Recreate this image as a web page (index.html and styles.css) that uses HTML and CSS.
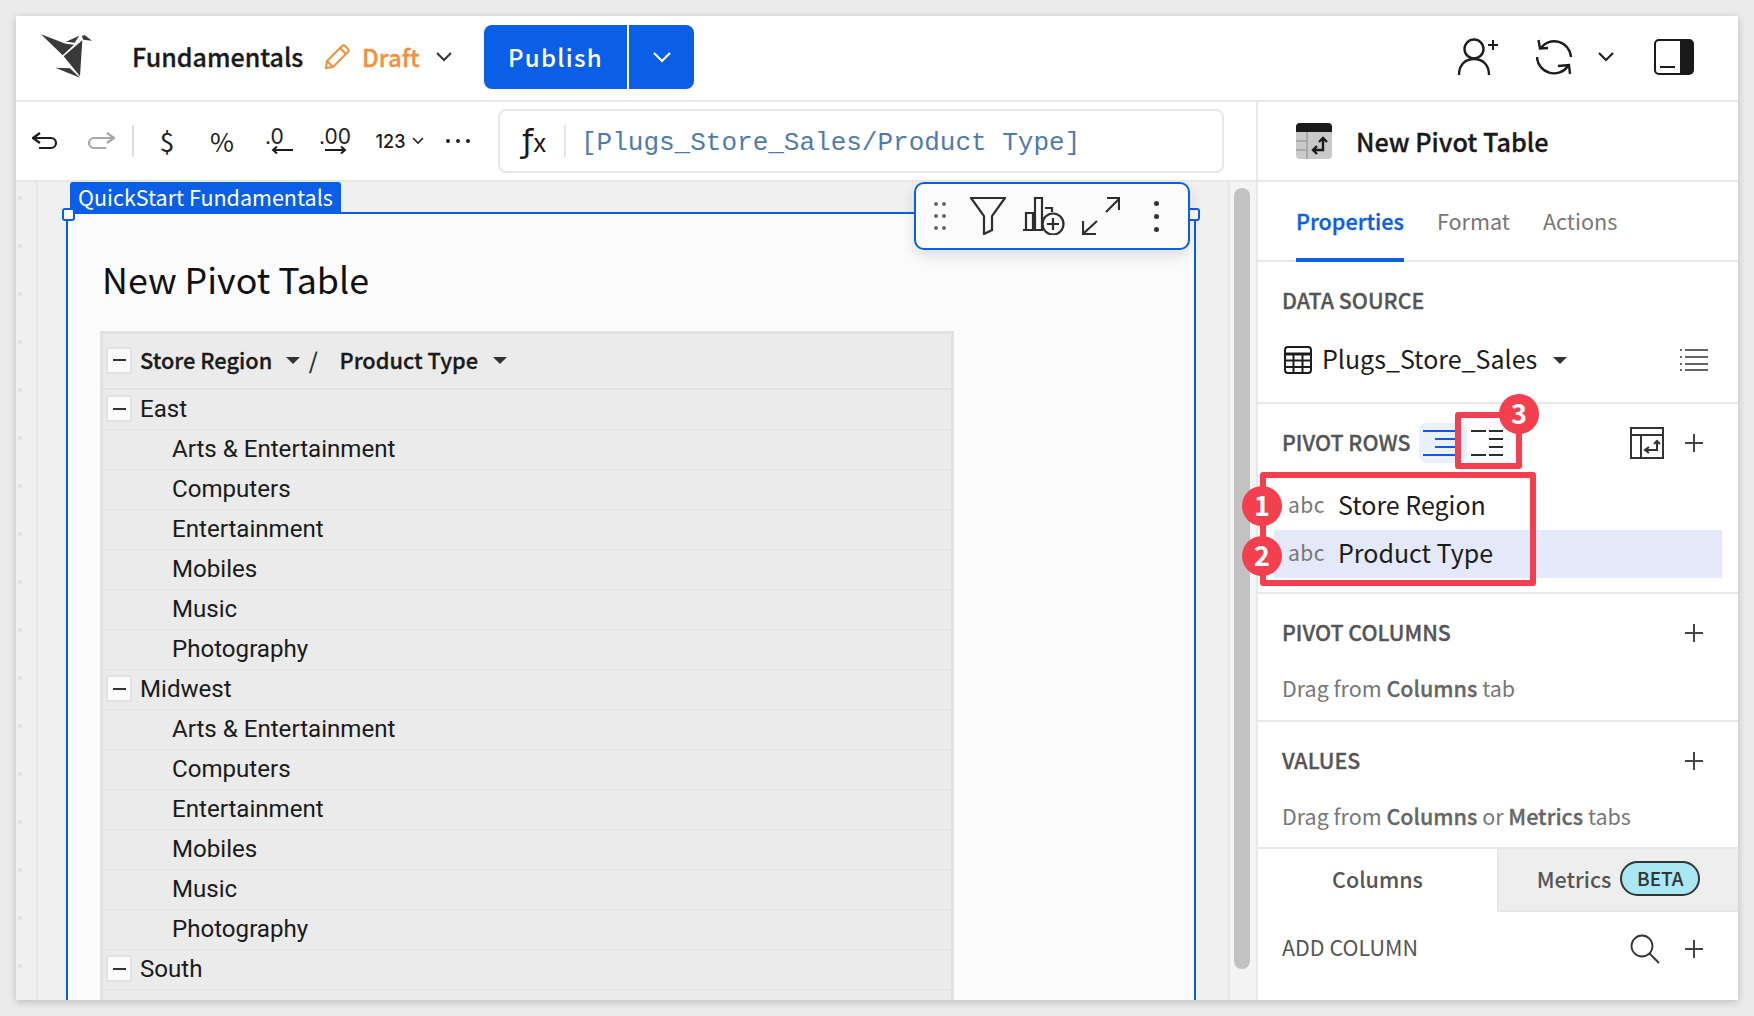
FILE: index.html
```html
<!DOCTYPE html>
<html lang="en">
<head>
<meta charset="utf-8"/>
<title>New Pivot Table</title>
<link rel="stylesheet" href="styles.css">
</head>
<body>
<div class="app">
  <header class="topbar">
    <svg class="logo" width="80" height="60" viewBox="0 0 240 180" fill="#3a3a3a">
      <polygon points="33,22 107,50 132,53 98,85"/>
      <polygon points="108,44 148,26 134,47"/>
      <polygon points="155,26 165,25 186,41 160,38"/>
      <polygon points="157,40 150,148 101,88 136,58"/>
      <polygon points="76,122 120,124 150,152"/>
    </svg>
    <span class="doc-name">Fundamentals</span>
    <svg class="pencil" width="26" height="26" viewBox="0 0 26 26" fill="none" stroke="#f0913f" stroke-width="2">
      <path d="M2 24l1-7L18 2c1-1 2-1 3 0l3 3c1 1 1 2 0 3L9 23z"/>
      <path d="M16 4l6 6M3 17l6 6"/>
    </svg>
    <span class="draft">Draft</span>
    <svg class="chev" width="16" height="10" viewBox="0 0 16 10"><path d="M1 1l7 7 7-7" fill="none" stroke="#333" stroke-width="2"/></svg>
    <div class="publish">
      <span class="publish-main">Publish</span>
      <span class="publish-more"><svg width="18" height="11" viewBox="0 0 18 11"><path d="M1 1l8 8 8-8" fill="none" stroke="#fff" stroke-width="2.2"/></svg></span>
    </div>
    <div class="top-right">
      <svg width="42" height="38" viewBox="0 0 42 38" fill="none" stroke="#1c1c1c" stroke-width="2.4">
        <circle cx="17" cy="11" r="9.5"/>
        <path d="M2 37c0-10 6-16 15-16s15 6 15 16"/>
        <path d="M36 2v10M31 7h10" stroke-width="2"/>
      </svg>
      <svg class="sync" width="36" height="37" viewBox="0 0 36 37" fill="none" stroke="#1c1c1c" stroke-width="2.4">
        <path d="M4.5 9A17 17 0 0 1 35 18"/>
        <path d="M1 18A17 17 0 0 0 32 27"/>
        <path d="M2.5 1L4 9.5l8-.5M22 27l11-1 1 9"/>
      </svg>
      <svg class="chev-sm" width="16" height="10" viewBox="0 0 16 10"><path d="M1 1l7 7 7-7" fill="none" stroke="#222" stroke-width="2.2"/></svg>
      <svg class="side-toggle" width="40" height="36" viewBox="0 0 40 36">
        <rect x="1" y="1" width="38" height="34" rx="4" fill="none" stroke="#1a1a1a" stroke-width="2"/>
        <path d="M26 1h9a4 4 0 0 1 4 4v26a4 4 0 0 1-4 4h-9z" fill="#1a1a1a"/>
        <path d="M6 28h15" stroke="#1a1a1a" stroke-width="2"/>
      </svg>
    </div>
  </header>

  <div class="main">
    <div class="left">
      <div class="toolbar">
        <svg class="tb-ico" width="26" height="18" viewBox="0 0 26 18" fill="none" stroke="#1c1c1c" stroke-width="2.2"><path d="M8 1L1 6l7 5M1 6h18a5 5 0 0 1 0 10H7"/></svg>
        <svg class="tb-ico" width="28" height="18" viewBox="0 0 28 18" fill="none" stroke="#a8a8a8" stroke-width="2.2"><path d="M20 1l7 5-7 5M27 6H7a5 5 0 0 0 0 10h12"/></svg>
        <span class="tb-sep"></span>
        <span class="tb-sym">$</span>
        <span class="tb-sym">%</span>
        <span class="tb-dec">.0
          <svg width="22" height="8" viewBox="0 0 22 8" fill="none" stroke="#1c1c1c" stroke-width="2"><path d="M22 4H2M6 0.5L2 4l4 3.5"/></svg>
        </span>
        <span class="tb-dec">.00
          <svg width="22" height="8" viewBox="0 0 22 8" fill="none" stroke="#1c1c1c" stroke-width="2"><path d="M0 4h20M16 0.5L20 4l-4 3.5"/></svg>
        </span>
        <span class="tb-num">123 <svg width="12" height="8" viewBox="0 0 12 8"><path d="M1 1l5 5 5-5" fill="none" stroke="#222" stroke-width="1.6"/></svg></span>
        <span class="tb-dots"><i></i><i></i><i></i></span>
        <div class="formula">
          <span class="fx"><b>ƒ</b>x</span>
          <span class="formula-text">[Plugs_Store_Sales/Product Type]</span>
        </div>
      </div>

      <div class="canvas">
        <div class="gutter"></div>
        <div class="sheet">
          <div class="el-label">QuickStart Fundamentals</div>
          <div class="element">
            <span class="handle handle-l"></span>
            <span class="handle handle-r"></span>
            <h1 class="el-title">New Pivot Table</h1>
            <div class="pivot">
              <div class="pivot-head">
                <span class="minus"></span>
                <span class="head-a">Store Region</span><span class="caret"></span>
                <span class="slash">/</span>
                <span class="head-b">Product Type</span><span class="caret"></span>
              </div>
              <div class="row group"><span class="minus"></span>East</div>
              <div class="row">Arts &amp; Entertainment</div>
              <div class="row">Computers</div>
              <div class="row">Entertainment</div>
              <div class="row">Mobiles</div>
              <div class="row">Music</div>
              <div class="row">Photography</div>
              <div class="row group"><span class="minus"></span>Midwest</div>
              <div class="row">Arts &amp; Entertainment</div>
              <div class="row">Computers</div>
              <div class="row">Entertainment</div>
              <div class="row">Mobiles</div>
              <div class="row">Music</div>
              <div class="row">Photography</div>
              <div class="row group"><span class="minus"></span>South</div>
              <div class="row">Arts &amp; Entertainment</div>
            </div>
          </div>
          <div class="el-tools">
            <span class="grip"><i></i><i></i><i></i><i></i><i></i><i></i></span>
            <svg class="t-filter" width="36" height="38" viewBox="0 0 36 38" fill="none" stroke="#2e2e2e" stroke-width="2.2"><path d="M1 1h34L22 19v14l-8 4V19z"/></svg>
            <svg class="t-chart" width="42" height="38" viewBox="0 0 42 38" fill="none" stroke="#2e2e2e" stroke-width="2.2">
              <path d="M0 33h20M3 33V16h7v17M12 33V1h7v32M22 11V11h7v4"/>
              <circle cx="30" cy="27" r="10.5"/>
              <path d="M30 21v12M24 27h12"/>
            </svg>
            <svg class="t-expand" width="38" height="38" viewBox="0 0 38 38" fill="none" stroke="#2e2e2e" stroke-width="2.2"><path d="M24 15L37 2M25 1h12v12M15 24L2 36M1 24v13h13"/></svg>
            <span class="kebab"><i></i><i></i><i></i></span>
          </div>
        </div>
        <div class="scroll-track"><div class="scroll-thumb"></div></div>
      </div>
    </div>

    <aside class="panel">
      <div class="panel-head">
        <svg width="36" height="36" viewBox="0 0 36 36">
          <rect width="36" height="36" rx="4" fill="#c9c9c9"/>
          <path d="M0 9V4a4 4 0 0 1 4-4h28a4 4 0 0 1 4 4v5z" fill="#1a1a1a"/>
          <path d="M11 9v27M0 18h11M0 27h11" stroke="#a9a9a9" stroke-width="2"/>
          <path d="M27 15v12H17M21 23l-4 4 4 4M23 19l4-4 4 4" fill="none" stroke="#1a1a1a" stroke-width="2.4"/>
        </svg>
        <span class="panel-title">New Pivot Table</span>
      </div>
      <nav class="tabs">
        <span class="tab active">Properties</span>
        <span class="tab">Format</span>
        <span class="tab">Actions</span>
      </nav>

      <section class="sec sec-source">
        <div class="sec-head"><span class="sec-label">DATA SOURCE</span></div>
        <div class="source">
          <svg width="28" height="28" viewBox="0 0 28 28" fill="none" stroke="#1c1c1c" stroke-width="2">
            <rect x="1" y="1" width="26" height="26" rx="3"/>
            <path d="M1 8h26" stroke-width="3"/>
            <path d="M1 14.5h26M1 21h26M9.5 8v19M18.5 8v19"/>
          </svg>
          <span class="source-name">Plugs_Store_Sales</span>
          <span class="caret"></span>
          <svg class="source-list" width="28" height="22" viewBox="0 0 28 22" stroke="#333" stroke-width="1.6">
            <path d="M5 1h23M5 8h23M5 15h23M5 21h23"/>
            <path d="M0 1h2M0 8h2M0 15h2M0 21h2"/>
          </svg>
        </div>
      </section>

      <section class="sec sec-rows">
        <div class="sec-head">
          <span class="sec-label">PIVOT ROWS</span>
          <span class="layout-toggle">
            <span class="layout-on">
              <svg width="32" height="26" viewBox="0 0 32 26" stroke="#0a5fe6" stroke-width="2"><path d="M0 1h32M12 9h20M12 17h20M0 25h32"/></svg>
            </span>
            <svg class="layout-off" width="32" height="26" viewBox="0 0 32 26" stroke="#2c2c2c" stroke-width="2"><path d="M0 1h15M0 25h15M18 1h14M18 9h14M18 17h14M18 25h14"/></svg>
          </span>
          <span class="head-tools">
            <svg width="34" height="32" viewBox="0 0 34 32" fill="none" stroke="#333" stroke-width="2">
              <rect x="1" y="1" width="32" height="30"/>
              <path d="M1 8h32M11 8v23"/>
              <path d="M27 14v9H15M19 20l-4 3 4 3M24 17l3-3 3 3"/>
            </svg>
            <span class="plus"></span>
          </span>
        </div>
        <div class="fields">
          <div class="field"><span class="abc">abc</span>Store Region</div>
          <div class="field selected"><span class="abc">abc</span>Product Type</div>
        </div>
      </section>

      <section class="sec sec-cols">
        <div class="sec-head"><span class="sec-label">PIVOT COLUMNS</span><span class="plus"></span></div>
        <p class="hint">Drag from <b>Columns</b> tab</p>
      </section>

      <section class="sec sec-values">
        <div class="sec-head"><span class="sec-label">VALUES</span><span class="plus"></span></div>
        <p class="hint">Drag from <b>Columns</b> or <b>Metrics</b> tabs</p>
      </section>

      <div class="sub-tabs">
        <span class="sub-tab on">Columns</span>
        <span class="sub-tab off">Metrics <span class="beta">BETA</span></span>
      </div>
      <div class="add-col">
        <span class="add-label">ADD COLUMN</span>
        <svg width="30" height="30" viewBox="0 0 30 30" fill="none" stroke="#333" stroke-width="1.8"><circle cx="12" cy="12" r="10.5"/><path d="M19.5 19.5L29 29"/></svg>
        <span class="plus"></span>
      </div>

      <span class="mark box-3"></span>
      <span class="mark box-fields"></span>
      <span class="badge badge-1">1</span>
      <span class="badge badge-2">2</span>
      <span class="badge badge-3">3</span>
    </aside>
  </div>
</div>
</body>
</html>
```

FILE: styles.css
```css
* { box-sizing: border-box; }
html, body { height: 100%; }
body {
  margin: 0;
  background: #ebebeb;
  font-family: "Noto Sans CJK SC", "Noto Sans", sans-serif;
  color: #1a1a1a;
  overflow: hidden;
}
svg { display: block; flex: none; }

.app {
  width: 1722px;
  height: 984px;
  margin: 16px 0 0 16px;
  background: #fff;
  box-shadow: 0 2px 8px rgba(0, 0, 0, 0.2);
  display: flex;
  flex-direction: column;
  overflow: hidden;
}

/* top bar */
.topbar {
  height: 86px;
  flex: none;
  border-bottom: 2px solid #e8e8e8;
  display: flex;
  align-items: center;
  padding: 0 0 2px 14px;
}
.doc-name { margin-left: 22px; width: 192px; padding-bottom: 2px; font-size: 25px; font-weight: 500; -webkit-text-stroke: 0.3px #1a1a1a; }
.draft { margin-left: 12px; width: 74px; padding-bottom: 2px; font-size: 24px; font-weight: 500; color: #f0913f; -webkit-text-stroke: 0.3px #f0913f; }
.publish {
  margin-left: 32px;
  width: 210px;
  height: 64px;
  display: flex;
  background: #0a5fe6;
  border-radius: 8px;
  color: #fff;
}
.publish-main {
  width: 145px;
  border-right: 2px solid #fff;
  padding-bottom: 2px;
  display: flex;
  align-items: center;
  justify-content: center;
  font-size: 24px;
  font-weight: 500;
  letter-spacing: 1.3px;
}
.publish-more { flex: 1; display: flex; align-items: center; justify-content: center; }
.top-right { margin-left: auto; padding-right: 44px; display: flex; align-items: center; }
.sync { margin-left: 37px; }
.chev-sm { margin-left: 26px; }
.side-toggle { margin-left: 40px; }

.main { flex: 1; min-height: 0; display: flex; }
.left { width: 1240px; flex: none; display: flex; flex-direction: column; }

/* format toolbar */
.toolbar {
  height: 80px;
  flex: none;
  border-bottom: 2px solid #e8e8e8;
  display: grid;
  grid-template-columns: 58px 54px 10px 58px 52px 62px 50px 80px 36px 1fr;
  align-items: center;
  justify-items: center;
}
.tb-sep { width: 2px; height: 32px; background: #dedede; }
.tb-sym { font-size: 26px; line-height: 30px; color: #1c1c1c; }
.tb-dec {
  display: flex;
  flex-direction: column;
  align-items: flex-start;
  font-family: "Inter", sans-serif;
  font-size: 21px;
  line-height: 19px;
  height: 28px;
  color: #1c1c1c;
}
.tb-dec svg { margin-left: 6px; }
.tb-num {
  display: flex;
  align-items: center;
  gap: 7px;
  font-family: "Inter", sans-serif;
  font-size: 18px;
  font-weight: 500;
}
.tb-dots { display: flex; gap: 6px; }
.tb-dots i { width: 4px; height: 4px; border-radius: 50%; background: #222; }
.formula {
  justify-self: start;
  margin-left: 22px;
  width: 726px;
  height: 64px;
  border: 2px solid #e8e8e8;
  border-radius: 8px;
  display: flex;
  align-items: center;
  padding-left: 22px;
}
.fx { width: 44px; height: 32px; border-right: 2px solid #e4e4e4; font-size: 26px; line-height: 32px; white-space: nowrap; }
.fx b { font-family: "DejaVu Sans", sans-serif; font-weight: 400; font-size: 32px; }
.formula-text { margin-left: 15px; padding-top: 4px; font-family: "Liberation Mono", monospace; font-size: 26px; color: #4f7cab; white-space: nowrap; }

/* canvas */
.canvas { flex: 1; min-height: 0; display: flex; background: #f0f0f0; overflow: hidden; }
.gutter {
  width: 22px;
  flex: none;
  border-right: 2px solid #e6e6e6;
  background-image: radial-gradient(circle at 4px 16px, #e2e2e2 2px, transparent 2.6px);
  background-size: 100% 48px;
}
.sheet { flex: 1; min-width: 0; position: relative; }
.el-label {
  margin-left: 32px;
  width: 271px;
  height: 30px;
  background: #0a5fe6;
  border-radius: 3px 3px 0 0;
  color: #fff;
  font-size: 21.5px;
  line-height: 29px;
  padding-left: 8px;
  white-space: nowrap;
}
.element {
  margin-left: 28px;
  width: 1130px;
  height: 900px;
  background: #fbfbfb;
  border: 2px solid #0a5fe6;
  padding-left: 32px;
  position: relative;
}
.handle {
  position: absolute;
  top: -6px;
  width: 13px;
  height: 13px;
  background: #fbfbfb;
  border: 2px solid #0a5fe6;
  border-radius: 3px;
}
.handle-l { left: -6px; }
.handle-r { right: -6px; }
.el-title { margin: 39px 0 0 2px; font-size: 35.8px; line-height: 50px; font-weight: 400; color: #111; }
.pivot {
  margin-top: 28px;
  width: 854px;
  background: #ebebeb;
  border: solid #e2e2e2;
  border-width: 3px 3px 0;
}
.pivot-head {
  height: 56px;
  border-bottom: 2px solid #e2e2e2;
  display: flex;
  align-items: center;
  padding: 0 0 2px 3px;
  font-weight: 500;
  font-size: 21.8px;
  -webkit-text-stroke: 0.3px #1a1a1a;
}
.minus {
  width: 26px;
  height: 27px;
  background: #fbfbfb;
  border: 2px solid #e2e2e2;
  display: flex;
  align-items: center;
  justify-content: center;
  margin-right: 8px;
  flex: none;
}
.minus::before { content: ""; width: 13px; height: 2px; background: #333; }
.head-a { width: 146px; padding-bottom: 2px; }
.head-b { width: 153px; padding-bottom: 2px; }
.slash { margin: 0 22px 0 9px; font-weight: 400; padding-bottom: 2px; }
.caret {
  width: 0;
  height: 0;
  border: solid transparent;
  border-width: 7px 7px 0;
  border-top-color: #333;
  flex: none;
}
.row {
  height: 40px;
  border-bottom: 1px solid #e3e3e3;
  display: flex;
  align-items: center;
  padding: 0 0 2px 69px;
  font-family: "Roboto", sans-serif;
  font-size: 24.1px;
  color: #1a1a1a;
}
.row.group { padding-left: 3px; }

/* floating tools on the selected element */
.el-tools {
  position: absolute;
  left: 876px;
  top: 0;
  width: 276px;
  height: 68px;
  background: #fbfbfb;
  border: 2px solid #0a5fe6;
  border-radius: 10px;
  box-shadow: 0 6px 14px rgba(0, 0, 0, 0.12);
  display: flex;
  align-items: center;
  padding-left: 18px;
  z-index: 2;
}
.grip { width: 12px; display: grid; grid-template-columns: 4px 4px; gap: 8px 4px; }
.grip i { width: 4px; height: 4px; border-radius: 50%; background: #666; }
.t-filter { margin-left: 24px; }
.t-chart { margin-left: 17px; }
.t-expand { margin-left: 17px; }
.kebab { margin-left: 34px; display: flex; flex-direction: column; gap: 8px; }
.kebab i { width: 5px; height: 5px; border-radius: 50%; background: #333; }

.scroll-track { width: 28px; flex: none; border-left: 2px solid #e8e8e8; background: #f4f4f4; padding: 6px 6px 0 4px; }
.scroll-thumb { width: 16px; height: 781px; border-radius: 8px; background: #c2c2c2; }

/* right panel */
.panel { flex: 1; min-width: 0; border-left: 2px solid #e8e8e8; position: relative; }
.panel-head {
  height: 80px;
  border-bottom: 2px solid #e8e8e8;
  display: flex;
  align-items: center;
  padding-left: 38px;
  gap: 24px;
}
.panel-title { font-size: 25.2px; font-weight: 500; -webkit-text-stroke: 0.3px #1a1a1a; }
.tabs {
  height: 80px;
  border-bottom: 2px solid #e8e8e8;
  display: flex;
  padding-left: 38px;
  gap: 33px;
}
.tab { height: 80px; padding-top: 21px; font-size: 21.6px; line-height: 36px; color: #777; }
.tab.active { color: #0a5fe6; font-weight: 500; border-bottom: 4px solid #0a5fe6; -webkit-text-stroke: 0.3px #0a5fe6; }

.sec { border-bottom: 2px solid #e8e8e8; padding-top: 24px; }
.sec-source { height: 142px; }
.sec-rows { height: 190px; }
.sec-cols { height: 128px; }
.sec-values { height: 125px; border-bottom: 0; }
.sec-head {
  height: 30px;
  display: flex;
  align-items: center;
  justify-content: space-between;
  padding: 0 35px 0 24px;
}
.sec-label { font-size: 21.4px; line-height: 30px; padding-bottom: 2px; font-weight: 500; color: #555; -webkit-text-stroke: 0.3px #555; }
.source { height: 40px; margin-top: 24px; display: flex; align-items: center; padding: 0 30px 0 26px; }
.source-name { margin-left: 10px; padding-bottom: 4px; font-size: 25px; color: #1c1c1c; }
.source .caret { margin-left: 16px; }
.source-list { margin-left: auto; }

.sec-rows .sec-head { justify-content: flex-start; }
.layout-toggle { margin-left: 9px; display: flex; align-items: center; }
.layout-on { width: 48px; height: 40px; background: #eaf0fb; border-radius: 8px; display: flex; align-items: center; padding-left: 4px; }
.layout-off { margin-left: 4px; }
.head-tools { margin-left: auto; display: flex; align-items: center; gap: 21px; }
.plus { width: 18px; height: 18px; position: relative; display: block; flex: none; }
.plus::before, .plus::after { content: ""; position: absolute; background: #444; }
.plus::before { left: 0; right: 0; top: 8px; height: 2px; }
.plus::after { top: 0; bottom: 0; left: 8px; width: 2px; }

.fields { margin: 24px 16px 0; }
.field { height: 48px; display: flex; align-items: center; padding: 0 0 4px 14px; font-size: 25px; color: #1c1c1c; }
.field.selected { background: #e3e9f8; }
.abc { width: 50px; font-size: 21px; letter-spacing: 0.5px; color: #777; }

.hint { margin: 25px 0 0; padding-left: 24px; font-size: 21.5px; line-height: 30px; color: #777; }
.hint b { font-weight: 500; color: #666; -webkit-text-stroke: 0.3px #666; }

.sub-tabs { height: 65px; display: flex; border-top: 2px solid #e8e8e8; }
.sub-tab { display: flex; align-items: center; justify-content: center; font-size: 21.5px; font-weight: 500; color: #555; }
.sub-tab.on { width: 239px; padding-bottom: 4px; }
.sub-tab.off { flex: 1; background: #eee; border-left: 2px solid #e6e6e6; border-bottom: 2px solid #e6e6e6; gap: 9px; padding-bottom: 3px; }
.beta {
  width: 80px;
  height: 35px;
  border: 2px solid #333;
  border-radius: 18px;
  background: #a9e8f2;
  color: #333;
  font-size: 19px;
  line-height: 29px;
  text-align: center;
}
.add-col { display: flex; align-items: center; padding: 20px 35px 0 24px; }
.add-label { font-size: 21.5px; line-height: 30px; padding-bottom: 3px; color: #555; margin-right: auto; }
.add-col .plus { margin-left: 25px; }

/* annotation marks over the panel */
.mark { position: absolute; border: 6px solid #f43f4f; border-radius: 3px; }
.box-3 { left: 197px; top: 310px; width: 67px; height: 57px; }
.box-fields { left: 2px; top: 370px; width: 276px; height: 114px; }
.badge {
  position: absolute;
  width: 40px;
  height: 40px;
  border-radius: 50%;
  background: #f43f4f;
  color: #fff;
  font-size: 27px;
  font-weight: 700;
  line-height: 38px;
  text-align: center;
}
.badge-1 { left: -16px; top: 384px; }
.badge-2 { left: -16px; top: 434px; }
.badge-3 { left: 241px; top: 292px; }
```
